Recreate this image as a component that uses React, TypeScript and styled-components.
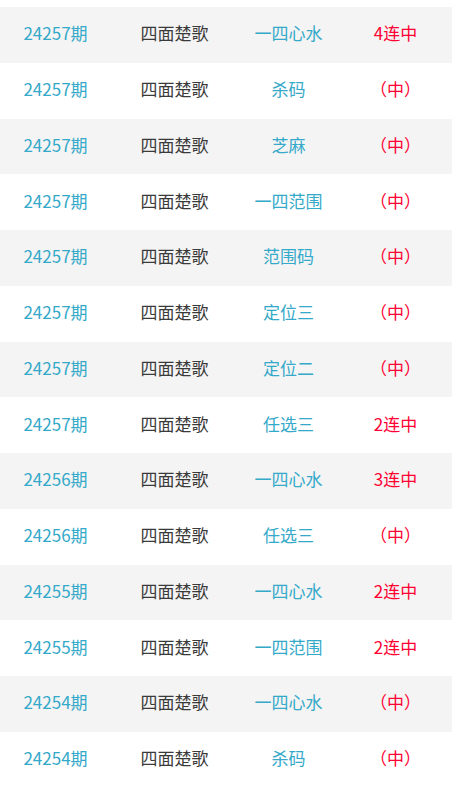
import React, { FC } from 'react';
import styled, { createGlobalStyle } from 'styled-components';

const GlobalStyle = createGlobalStyle`
  html, body {
    margin: 0;
    padding: 0;
    background: #fff;
  }
  body {
    font-family: "Microsoft YaHei", "Noto Sans CJK SC", "Noto Sans", sans-serif;
  }
`;

type Row = {
  issue: string;
  name: string;
  kind: string;
  result: string;
};

const rows: Row[] = [
  { issue: '24257期', name: '四面楚歌', kind: '一四心水', result: '4连中' },
  { issue: '24257期', name: '四面楚歌', kind: '杀码', result: '（中）' },
  { issue: '24257期', name: '四面楚歌', kind: '芝麻', result: '（中）' },
  { issue: '24257期', name: '四面楚歌', kind: '一四范围', result: '（中）' },
  { issue: '24257期', name: '四面楚歌', kind: '范围码', result: '（中）' },
  { issue: '24257期', name: '四面楚歌', kind: '定位三', result: '（中）' },
  { issue: '24257期', name: '四面楚歌', kind: '定位二', result: '（中）' },
  { issue: '24257期', name: '四面楚歌', kind: '任选三', result: '2连中' },
  { issue: '24256期', name: '四面楚歌', kind: '一四心水', result: '3连中' },
  { issue: '24256期', name: '四面楚歌', kind: '任选三', result: '（中）' },
  { issue: '24255期', name: '四面楚歌', kind: '一四心水', result: '2连中' },
  { issue: '24255期', name: '四面楚歌', kind: '一四范围', result: '2连中' },
  { issue: '24254期', name: '四面楚歌', kind: '一四心水', result: '（中）' },
  { issue: '24254期', name: '四面楚歌', kind: '杀码', result: '（中）' },
];

const List = styled.div`
  padding-top: 7px;
  width: 452px;
`;

const RowLine = styled.div<{ $striped: boolean }>`
  display: grid;
  grid-template-columns: 111px 127px 101px 113px;
  height: 55.75px;
  box-sizing: border-box;
  padding-bottom: 3px;
  align-items: center;
  background: ${({ $striped }) => ($striped ? '#f4f4f4' : '#fff')};
  font-size: 17px;
  line-height: 20px;
`;

const Cell = styled.div<{ $tone: 'blue' | 'dark' | 'red' }>`
  text-align: center;
  white-space: nowrap;
  color: ${({ $tone }) =>
    $tone === 'blue' ? '#34a9c9' : $tone === 'red' ? '#ff0033' : '#3a3a3a'};
`;

const App: FC = () => (
  <>
    <GlobalStyle />
    <List>
      {rows.map((r, i) => (
        <RowLine key={i} $striped={i % 2 === 0}>
          <Cell $tone="blue">{r.issue}</Cell>
          <Cell $tone="dark">{r.name}</Cell>
          <Cell $tone="blue">{r.kind}</Cell>
          <Cell $tone="red">{r.result}</Cell>
        </RowLine>
      ))}
    </List>
  </>
);

export default App;
